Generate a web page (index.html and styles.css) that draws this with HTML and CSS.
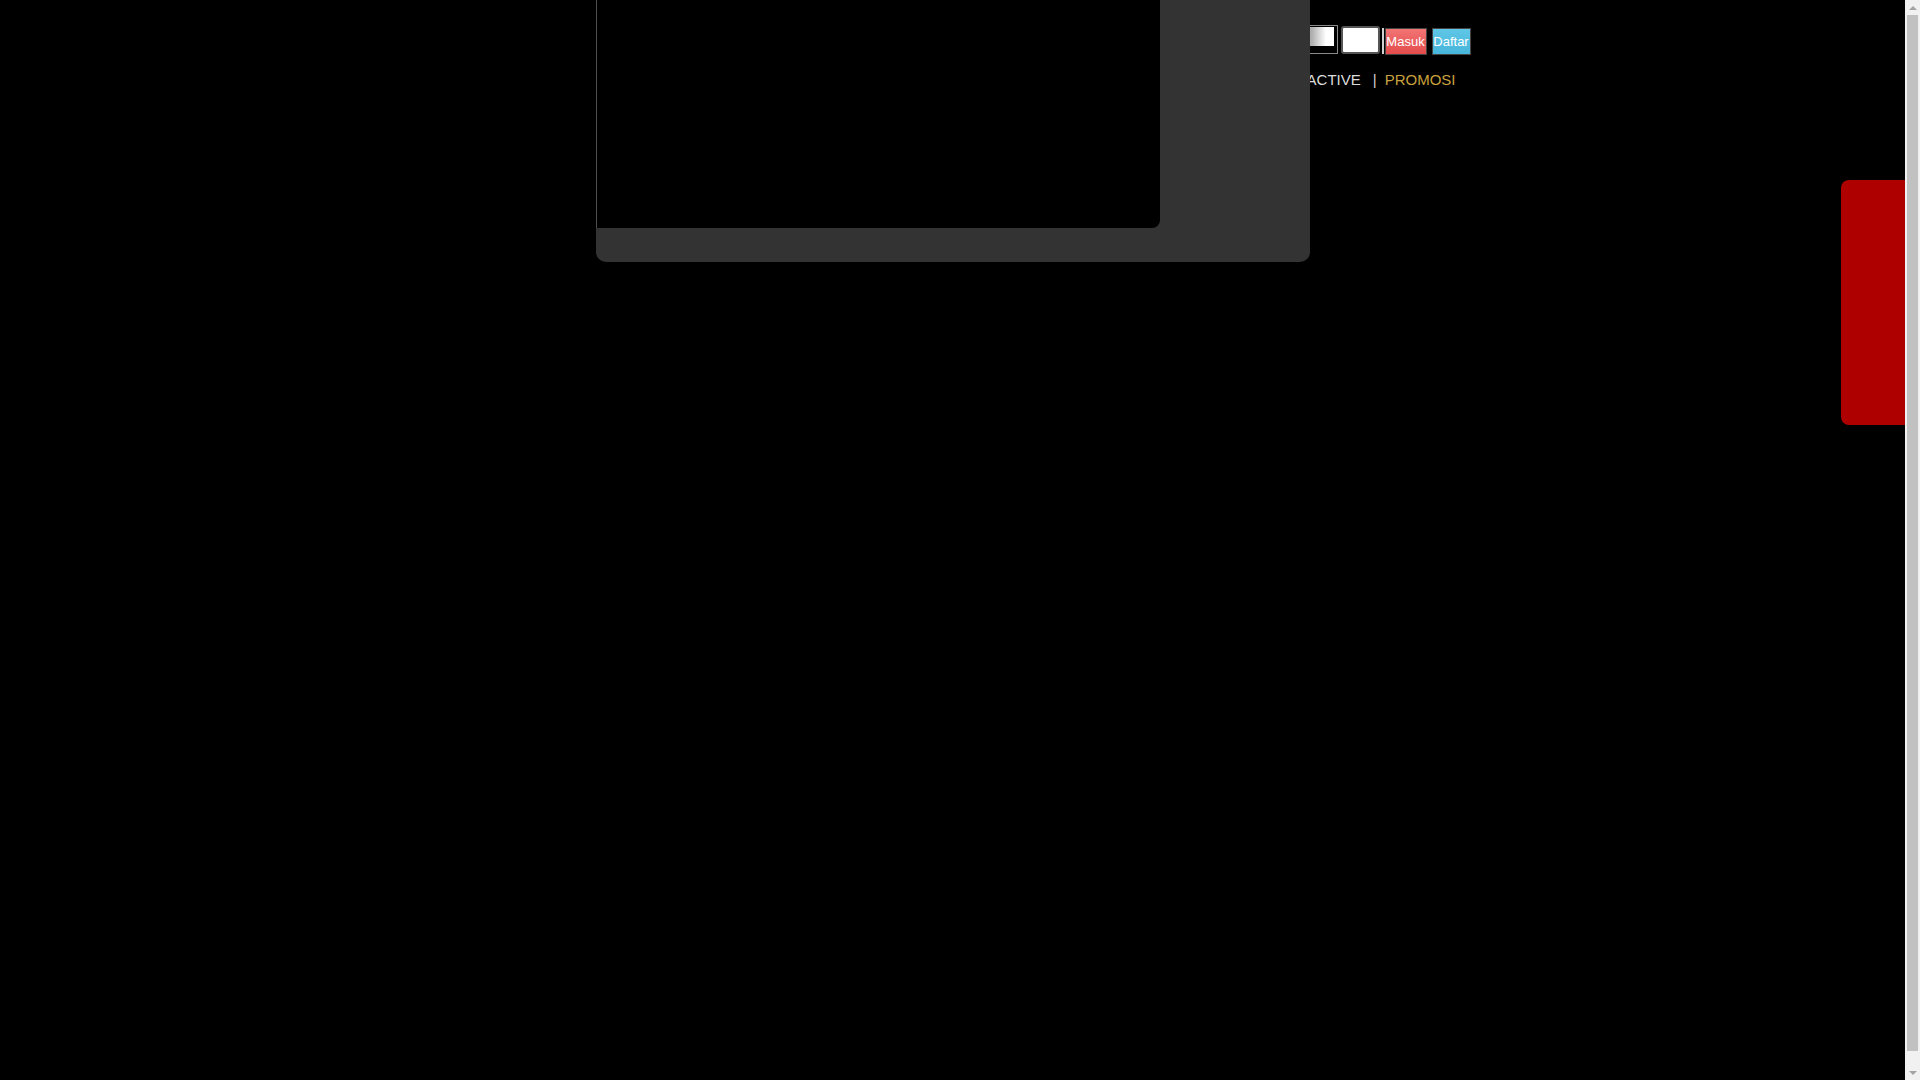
FILE: index.html
```html
<!DOCTYPE html>
<html lang="id">
<head>
<meta charset="utf-8">
<title>Beranda</title>
<link rel="stylesheet" href="styles.css">
</head>
<body>
<div class="page">
  <header class="header">
    <div class="login-row">
      <div class="field field-user"><div class="field-fill"></div></div>
      <div class="field field-pass"></div>
      <span class="field-tick"></span>
      <button class="btn btn-login">Masuk</button>
      <button class="btn btn-register">Daftar</button>
    </div>
    <nav class="nav">
      <a class="nav-link" href="#">HOME</a>
      <span class="nav-sep">|</span>
      <a class="nav-link" href="#">SPORTS</a>
      <span class="nav-sep">|</span>
      <a class="nav-link" href="#">CASINO</a>
      <span class="nav-sep">|</span>
      <a class="nav-link" href="#">INTERACTIVE</a>
      <span class="nav-sep">|</span>
      <a class="nav-link nav-promo" href="#">PROMOSI</a>
    </nav>
  </header>

  <div class="popup">
    <div class="popup-frame"></div>
  </div>

  <div class="side-tab"></div>
</div>

<div class="scrollbar">
  <span class="scroll-arrow scroll-up"></span>
  <span class="scroll-thumb"></span>
  <span class="scroll-arrow scroll-down"></span>
</div>
</body>
</html>
```

FILE: styles.css
```css
html, body {
  margin: 0;
  padding: 0;
  background: #000;
  overflow: hidden;
}

body {
  font-family: "Liberation Sans", Arial, sans-serif;
  color: #ddd;
}

.page {
  position: relative;
  width: 1905px;
  height: 1080px;
}

.header {
  width: 1040px;
  margin: 0 auto;
  display: flex;
  flex-direction: column;
  align-items: flex-end;
}

.login-row {
  display: flex;
  align-items: flex-start;
  padding-top: 25px;
  height: 31px;
  margin-right: 2px;
}

.field {
  box-sizing: border-box;
}

.field-user {
  width: 120px;
  height: 29px;
  border: 1px solid #8a8a8a;
  background: #000;
  padding: 1px 3px 7px 1px;
}

.field-fill {
  height: 100%;
  background: linear-gradient(to left, #fff 0, #fff 8px, #b0b0b0 22px, #8a8a8a 40px, #777 100%);
}

.field-pass {
  width: 39px;
  height: 28px;
  margin-top: 1px;
  margin-left: 3px;
  background: #fff;
  border: 2px solid #555;
  border-radius: 3px;
}

.field-tick {
  width: 2px;
  height: 26px;
  margin-top: 3px;
  margin-left: 2px;
  background: #cfcfcf;
}

.btn {
  box-sizing: border-box;
  height: 27px;
  margin-top: 3px;
  padding: 0;
  border: 1px solid #444;
  font-family: "Liberation Sans", Arial, sans-serif;
  font-size: 13px;
  color: #fff;
  cursor: pointer;
  line-height: 25px;
  white-space: nowrap;
  overflow: hidden;
  text-align: center;
}

.btn-login {
  width: 42px;
  margin-left: 1px;
  background: linear-gradient(#f27474, #e44c4c);
}

.btn-register {
  width: 39px;
  margin-left: 5px;
  background: linear-gradient(#5fc6e6, #47b6da);
}

.nav {
  display: flex;
  align-items: center;
  margin-top: 15px;
  padding-right: 17px;
  font-size: 15px;
  line-height: 17px;
}

.nav-link {
  color: #dcdcdc;
  text-decoration: none;
}

.nav-sep {
  color: #cfcfcf;
  margin: 0 8px 0 12px;
}

.nav-promo {
  color: #c9a13e;
}

.popup {
  position: absolute;
  top: 0;
  left: 50%;
  transform: translateX(-50%);
  width: 714px;
  height: 262px;
  background: #333;
  border-radius: 0 0 10px 10px;
  z-index: 2;
}

.popup-frame {
  box-sizing: border-box;
  width: 564px;
  height: 228px;
  background: #000;
  border-left: 1px solid #4d4d4d;
  border-radius: 0 0 8px 0;
}

.side-tab {
  position: absolute;
  top: 180px;
  right: 0;
  width: 64px;
  height: 245px;
  background: #af0000;
  border-radius: 8px 0 0 8px;
  z-index: 3;
}

.scrollbar {
  position: fixed;
  top: 0;
  right: 0;
  width: 15px;
  height: 1080px;
  background: #f1f1f1;
  display: flex;
  flex-direction: column;
  align-items: center;
}

.scroll-arrow {
  flex: none;
  width: 15px;
  height: 15px;
  display: flex;
  align-items: center;
  justify-content: center;
}

.scroll-arrow::before {
  content: "";
  width: 0;
  height: 0;
  border-left: 4px solid transparent;
  border-right: 4px solid transparent;
}

.scroll-up::before {
  border-bottom: 4px solid #a3a3a3;
}

.scroll-down::before {
  border-top: 4px solid #a3a3a3;
}

.scroll-thumb {
  flex: 1;
  width: 11px;
  margin: 0 0 14px;
  background: #c1c1c1;
}
```
